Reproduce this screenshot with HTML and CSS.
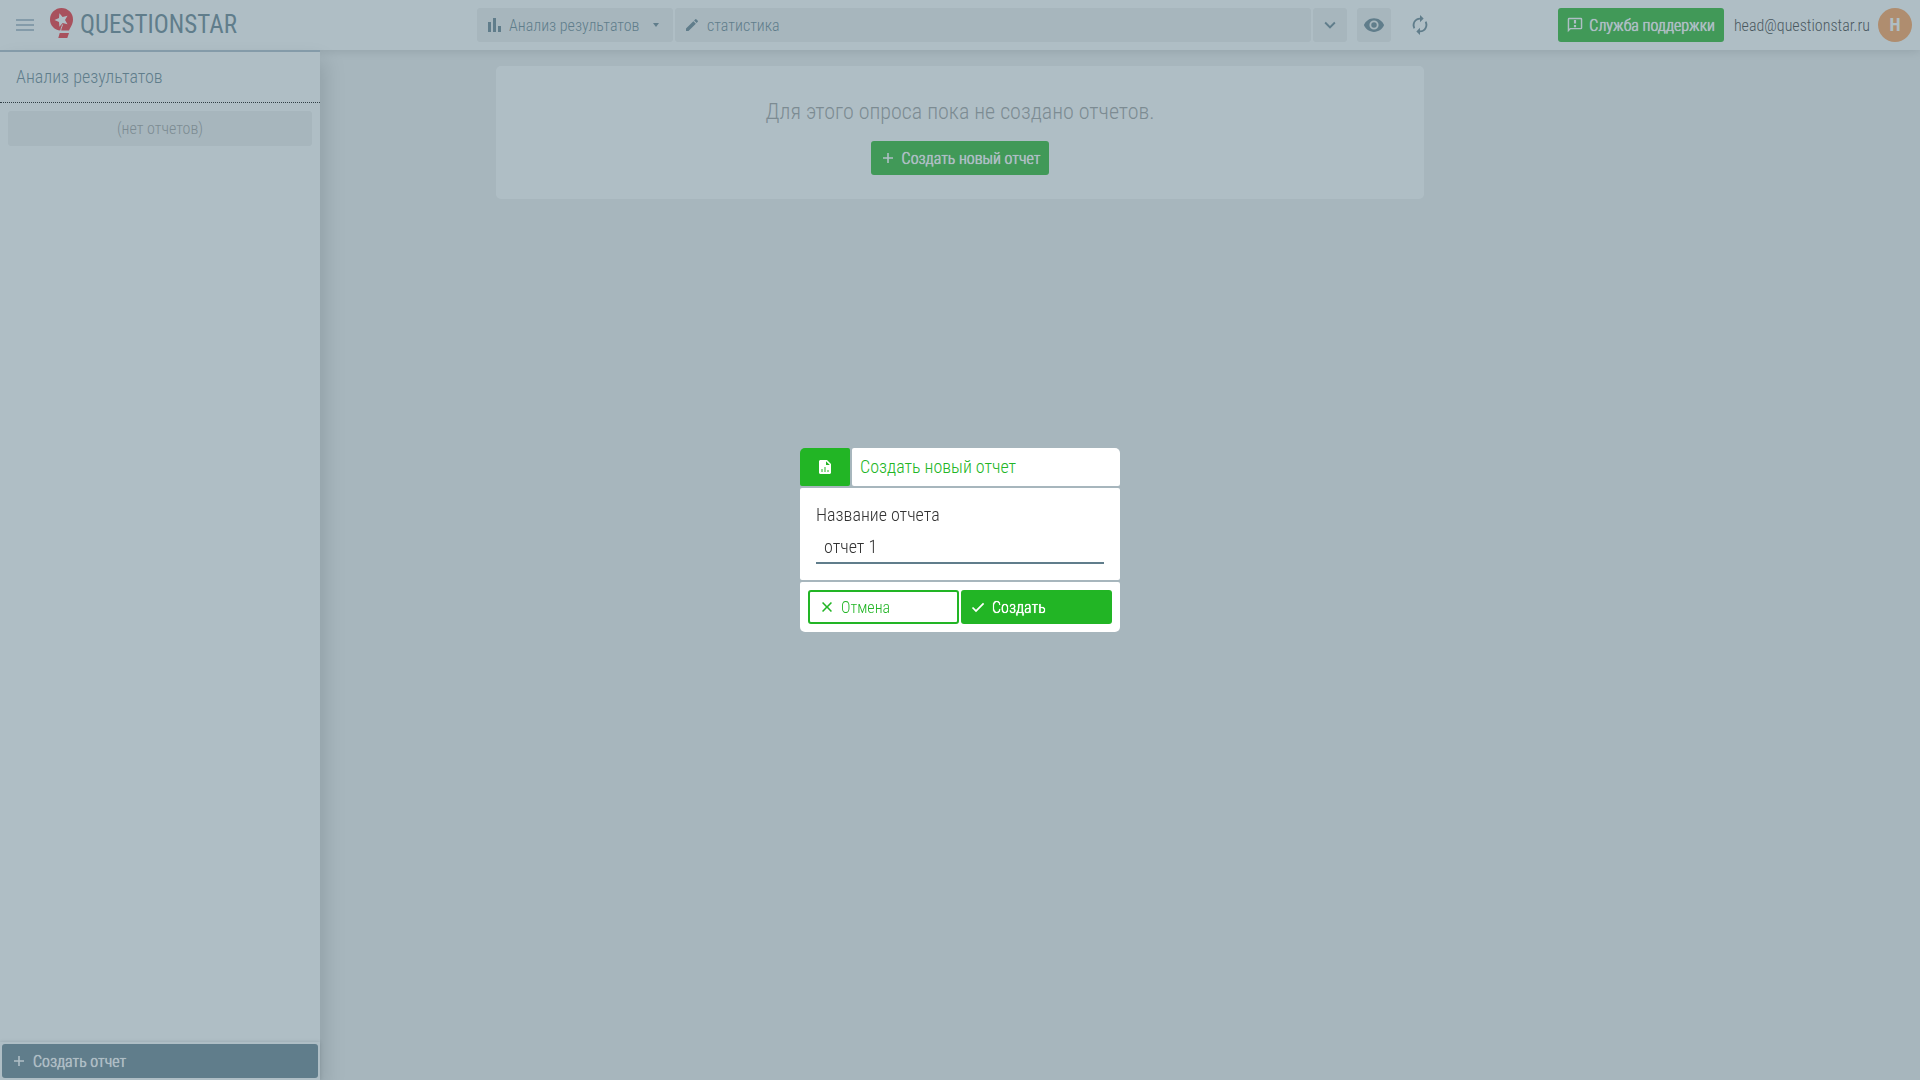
FILE: index.html
```
<!DOCTYPE html>
<html lang="ru">
<head>
    <meta charset="utf-8">
    <meta name="viewport" content="width=device-width, initial-scale=1">
    <title>QUESTIONSTAR</title>
    <link rel="stylesheet" href="styles.css">
</head>
<body>
    <header class="header">
        <div class="header_left">
            <button class="btn_icon menu_btn" type="button" aria-label="Меню">
                <svg width="18" height="12" viewBox="0 0 18 12"><path d="M0 0h18v2H0zM0 5h18v2H0zM0 10h18v2H0z"/></svg>
            </button>
            <a class="logo" href="#">
                <svg width="24" height="34" viewBox="0 0 24 34">
                    <path d="M11.500 0A11.500 11.500 0 0 0 0 11.500C0 17.500 4.500 22 10.500 22.500h8.500C20.500 19 23 16.500 23 11.500A11.500 11.500 0 0 0 11.500 0z"/>
                    <path d="M9.700 25H19l-1.700 5h-9z"/>
                    <path class="logo_star" d="M4.500 12l4.500-1.900.4-4.900 3.200 3.700 4.900-1.100-2.500 4.200 2.500 4.200-4.900-1.100-3.200 3.700-.4-4.900z"/>
                    <path class="logo_cut" d="M10.600 23.500c.2-2.500 1-4 2-7"/>
                </svg>
                <span>QUESTIONSTAR</span>
            </a>
        </div>
        <div class="header_center">
            <label class="field section_field">
                <svg width="16" height="16" viewBox="0 0 16 16"><path d="M2 5h3v10H2zM7 1h3v14H7zM12 9h3v6h-3z"/></svg>
                <select aria-label="Раздел">
                    <option>Анализ результатов</option>
                </select>
                <svg class="caret" width="8" height="4" viewBox="0 0 8 4"><path d="M1 0h6L4 4z"/></svg>
            </label>
            <label class="field name_field">
                <svg width="16" height="16" viewBox="0 0 24 24"><path d="M3 17.250V21h3.750L17.810 9.940l-3.750-3.750L3 17.250zM20.710 7.040c.39-.39.39-1.020 0-1.410l-2.340-2.340a1 1 0 0 0-1.410 0l-1.830 1.830 3.750 3.750 1.830-1.830z"/></svg>
                <input type="text" value="статистика" aria-label="Название опроса">
            </label>
            <button class="btn_icon grey" type="button" aria-label="Список">
                <svg width="22" height="22" viewBox="0 0 24 24"><path d="M7.410 8.590 12 13.170l4.590-4.580L18 10l-6 6-6-6z"/></svg>
            </button>
            <button class="btn_icon grey view_btn" type="button" aria-label="Просмотр">
                <svg width="22" height="22" viewBox="0 0 24 24"><path d="M12 4.500C7 4.500 2.730 7.610 1 12c1.730 4.390 6 7.500 11 7.500s9.270-3.110 11-7.500c-1.730-4.390-6-7.500-11-7.500zM12 17a5 5 0 1 1 0-10 5 5 0 0 1 0 10zm0-8a3 3 0 1 0 0 6 3 3 0 0 0 0-6z"/></svg>
            </button>
            <button class="btn_icon refresh_btn" type="button" aria-label="Обновить">
                <svg width="22" height="22" viewBox="0 0 24 24"><path d="M12 6v3l4-4-4-4v3a8 8 0 0 0-6.760 12.260L6.700 14.800A5.900 5.900 0 0 1 6 12a6 6 0 0 1 6-6zm6.760 1.740L17.300 9.200c.44.840.7 1.790.7 2.800a6 6 0 0 1-6 6v-3l-4 4 4 4v-3a8 8 0 0 0 6.760-12.260z"/></svg>
            </button>
        </div>
        <div class="header_right">
            <button class="btn green" type="button">
                <svg width="16" height="16" viewBox="1 1 22 22"><path d="M20 2H4a2 2 0 0 0-2 2v18l4-4h14a2 2 0 0 0 2-2V4a2 2 0 0 0-2-2zm0 14H5.170L4 17.170V4h16v12zM10.500 5h3v5h-3zM10.500 12h3v3h-3z"/></svg>
                Служба поддержки
            </button>
            <span class="user_mail">head@questionstar.ru</span>
            <span class="avatar">H</span>
        </div>
    </header>

    <aside class="sidebar">
        <h2 class="sidebar_title">Анализ результатов</h2>
        <div class="sidebar_list">
            <div class="sidebar_empty">(нет отчетов)</div>
        </div>
        <div class="sidebar_footer">
            <button class="btn slate" type="button">
                <svg width="16" height="16" viewBox="0 0 16 16"><path d="M7.200 3h1.600v4.200H13v1.600H8.800V13H7.200V8.800H3V7.200h4.200z"/></svg>
                Создать отчет
            </button>
        </div>
    </aside>

    <main class="content">
        <section class="card">
            <p class="card_text">Для этого опроса пока не создано отчетов.</p>
            <button class="btn green" type="button">
                <svg width="16" height="16" viewBox="0 0 16 16"><path d="M7.200 3h1.600v4.200H13v1.600H8.800V13H7.200V8.800H3V7.200h4.200z"/></svg>
                Создать новый отчет
            </button>
        </section>
    </main>

    <div class="overlay">
        <form class="modal" role="dialog" aria-labelledby="modal_title">
            <div class="modal_header">
                <div class="modal_icon">
                    <svg width="16" height="16" viewBox="0 0 16 16"><path fill-rule="evenodd" d="M3.500 1H10l4 4v8.500c0 .8-.7 1.500-1.500 1.500h-9c-.8 0-1.500-.7-1.500-1.500v-11C2 1.700 2.700 1 3.500 1zM9 2.200V6h3.800zM4.500 10v3h1v-3zM7.500 8v5h1V8zM10.500 11v2h1v-2z"/></svg>
                </div>
                <h2 class="modal_title" id="modal_title">Создать новый отчет</h2>
            </div>
            <div class="modal_body">
                <label for="report_name">Название отчета</label>
                <input type="text" id="report_name" value="отчет 1">
            </div>
            <div class="modal_footer">
                <button class="btn outline" type="button">
                    <svg width="16" height="16" viewBox="0 0 16 16"><path d="M4.100 3 8 6.900 11.900 3 13 4.100 9.100 8l3.900 3.900-1.100 1.100L8 9.100 4.100 13 3 11.900 6.900 8 3 4.100z"/></svg>
                    Отмена
                </button>
                <button class="btn green" type="submit">
                    <svg width="16" height="16" viewBox="0 0 16 16"><path d="m6 10.800 7-7 1.200 1.200L6 13.200 1.900 9.100l1.200-1.200z"/></svg>
                    Создать
                </button>
            </div>
        </form>
    </div>
</body>
</html>
```
FILE: styles.css
```
*{
    box-sizing: border-box;
}
body{
    margin:0;
    min-height:100vh;
    display:grid;
    grid-template-columns:320px 1fr;
    grid-template-rows:50px 1fr;
    background:#eee;
    color:#333;
    font-family:"Roboto Condensed", Roboto, sans-serif;
    font-size:16px;
    font-weight:300;
}
button, input, select{
    font:inherit;
    color:inherit;
    border:0;
    padding:0;
    background:none;
    outline:none;
}
button{
    cursor:pointer;
}
h2, p{
    margin:0;
    font-weight:300;
}
svg{
    fill:currentColor;
    flex:none;
}

/* buttons */
.btn{
    display:inline-flex;
    align-items:center;
    gap:6px;
    height:34px;
    padding:0 9px;
    border-radius:3px;
    color:#fff;
    text-shadow:0 0 0 #fff, 0 0 1px #fff;
    white-space:nowrap;
}
.btn_icon{
    display:flex;
    align-items:center;
    justify-content:center;
    width:34px;
    height:34px;
    border-radius:3px;
}
.green{
    background:#22b525;
}
.slate{
    background:#607d8b;
}
.grey{
    background:#eee;
}
.outline{
    border:2px solid #22b525;
    color:#22b525;
    text-shadow:none;
}

/* header */
.header{
    grid-column:1 / 3;
    display:flex;
    align-items:center;
    padding:0 8px 0 2px;
    background:#fff;
    color:#607d8b;
    box-shadow:0 0 10px rgba(0,0,0,0.2);
    z-index:2;
}
.header_left, .header_right{
    flex:1;
    display:flex;
    align-items:center;
}
.header_right{
    justify-content:flex-end;
}
.menu_btn{
    margin-left:6px;
    color:#a9b8c6;
}
.logo{
    display:flex;
    align-items:center;
    gap:6px;
    margin-left:8px;
    color:#607d8b;
    font-size:25px;
    font-weight:400;
    line-height:32px;
    text-decoration:none;
}
.logo svg{
    fill:#f0252f;
}
.logo .logo_star{
    fill:#fff;
}
.logo .logo_cut{
    fill:none;
    stroke:#fff;
}
.header_center{
    flex:0 1 960px;
    display:flex;
    gap:2px;
}
.field{
    display:flex;
    align-items:center;
    gap:7px;
    height:34px;
    padding:0 9px;
    border-radius:3px;
    background:#eee;
}
.section_field{
    width:196px;
}
.section_field select{
    appearance:none;
    flex:1;
    min-width:0;
}
.caret{
    margin-right:4px;
}
.name_field{
    flex:1;
}
.name_field input{
    flex:1;
    min-width:0;
}
.view_btn{
    margin-left:8px;
}
.refresh_btn{
    margin-left:10px;
}
.user_mail{
    margin:0 8px 0 10px;
    color:#333;
}
.avatar{
    width:34px;
    border-radius:50%;
    background:#ff9d53;
    color:#fff;
    font-size:18px;
    font-weight:700;
    line-height:34px;
    text-align:center;
}

/* sidebar */
.sidebar{
    grid-column:1;
    grid-row:2;
    display:flex;
    flex-direction:column;
    background:#fff;
    border-top:2px solid #a9b8c6;
    box-shadow:4px 10px 20px rgba(0,0,0,0.2);
    z-index:3;
}
.sidebar_title{
    padding:0 16px;
    border-bottom:1px dotted #000;
    color:#607d8b;
    font-size:18px;
    line-height:50px;
}
.sidebar_list{
    flex:1;
    padding:8px;
}
.sidebar_empty{
    border-radius:3px;
    background:#eee;
    color:#999;
    line-height:35px;
    text-align:center;
}
.sidebar_footer{
    padding:2px;
    box-shadow:0 0 4px rgba(0,0,0,0.2);
}
.sidebar_footer .btn{
    width:100%;
}

/* content is centred on the window, not on the column beside the sidebar */
.content{
    grid-column:1 / 3;
    grid-row:2;
    padding:16px;
}
.card{
    max-width:928px;
    margin:0 auto;
    padding:29px 16px 24px;
    border-radius:5px;
    background:#fff;
    text-align:center;
}
.card_text{
    margin-bottom:12px;
    color:#999;
    font-size:22px;
    line-height:34px;
}

/* modal */
.overlay{
    position:fixed;
    inset:0;
    z-index:10;
    display:flex;
    align-items:center;
    justify-content:center;
    background:rgba(96,125,139,0.5);
}
.modal{
    display:flex;
    flex-direction:column;
    gap:2px;
    width:320px;
    border-radius:5px;
    overflow:hidden;
}
.modal_header{
    display:flex;
    gap:2px;
    height:38px;
}
.modal_icon{
    display:flex;
    align-items:center;
    justify-content:center;
    width:50px;
    border-radius:2px;
    background:#22b525;
    color:#fff;
}
.modal_title{
    flex:1;
    padding:0 8px;
    border-radius:2px;
    background:#fff;
    color:#22b525;
    font-size:18px;
    line-height:38px;
}
.modal_body{
    padding:16px;
    border-radius:2px;
    background:#fff;
    font-size:18px;
}
.modal_body label{
    display:block;
    line-height:22px;
    margin-bottom:6px;
}
.modal_body input{
    display:block;
    width:100%;
    height:32px;
    padding:0 8px 2px;
    border-bottom:2px solid #607d8b;
}
.modal_footer{
    display:grid;
    grid-template-columns:1fr 1fr;
    gap:2px;
    padding:8px;
    border-radius:2px;
    background:#fff;
}
```
